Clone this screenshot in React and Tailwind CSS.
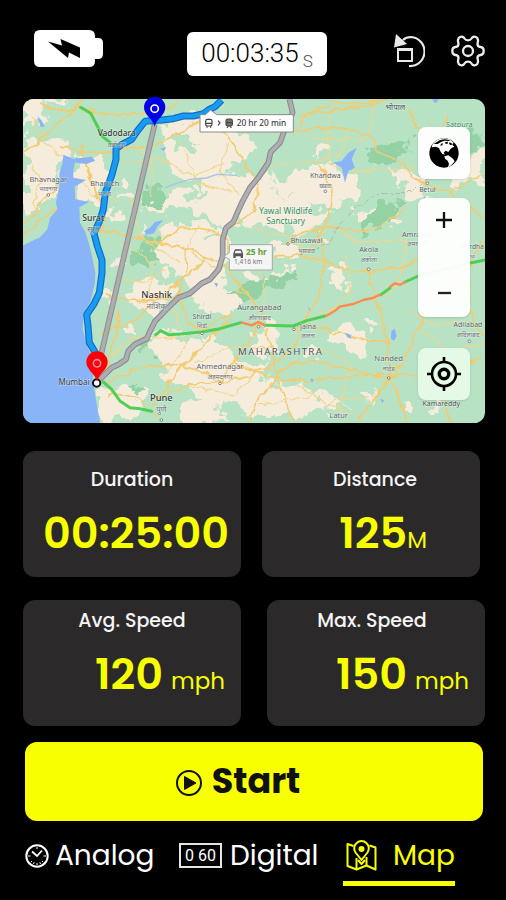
import React from "react";

/* Map drawing: one unit is a third of a CSS pixel at the narrowest layout. */

const creamPatches = [
  "9,110 60,70 130,85 175,30 130,9 9,9",
  "9,130 130,120 150,190 125,210 110,280 60,330 9,400",
  "165,185 215,170 260,210 240,330 190,330 165,285",
  "430,90 530,50 650,110 720,120 680,190 580,250 470,240 430,190",
  "560,235 720,230 770,290 700,360 600,390 520,330",
  "440,290 520,275 560,330 480,350 380,340 360,310",
  "420,400 520,365 610,400 620,500 570,570 470,550 410,480",
  "340,560 440,555 470,600 420,660 350,640 320,600",
  "540,560 600,530 660,600 640,670 560,660 520,610",
  "790,240 900,205 1020,250 1030,300 930,330 820,310 730,260",
  "640,320 760,290 870,320 940,360 850,410 740,390 650,380",
  "400,715 520,705 610,740 700,830 710,910 600,940 460,860 400,770",
  "690,700 760,680 780,760 720,790",
  "640,850 760,860 940,905 990,930 860,955 700,965 620,930",
  "940,700 1000,690 1050,740 1030,780 950,750 910,730",
  "930,510 980,510 975,590 940,570",
  "760,450 840,450 850,490 770,485",
  "1110,210 1190,240 1250,310 1190,310 1130,270",
  "1290,190 1390,170 1390,250 1300,270",
  "240,890 330,860 380,900 350,975 240,975",
  "480,930 560,910 620,975 480,978",
  "640,790 740,800 730,840 660,830",
  "1010,340 1070,330 1060,360 1010,365",
  "1230,930 1260,920 1265,975 1235,975",
];

const creamSpecks = [
  [910, 165, 18], [1110, 380, 18], [1130, 345, 16], [1060, 680, 14], [780, 540, 16],
  [820, 520, 16], [900, 430, 16], [500, 170, 22], [320, 280, 16], [290, 360, 18],
  [270, 600, 18], [330, 700, 14], [1040, 900, 14], [1160, 930, 14], [870, 770, 18],
  [700, 540, 20], [1170, 300, 18], [1080, 200, 12], [300, 500, 14], [370, 420, 12],
];

const forestPatches = [
  "360,300 400,265 440,280 430,320 380,335",
  "340,460 400,430 420,480 380,530 345,500",
  "1010,390 1090,310 1160,320 1120,370 1050,400 1015,415",
  "1290,90 1390,110 1390,170 1310,160",
  "620,590 720,550 830,530 820,560 720,590 660,610",
  "360,740 400,735 400,770 365,775",
  "330,860 355,850 352,900 335,895",
  "1040,180 1130,130 1180,150 1090,210",
];

const greenPatches = [
  "60,30 180,20 340,60 370,120 250,190 160,170 120,110",
  "9,350 60,330 110,335 60,400 9,430",
  "460,120 540,130 530,160 470,165",
  "490,300 560,290 540,310 500,320",
  "470,720 540,715 560,740 480,745",
  "560,420 600,410 590,440",
];

const roads = [
  "M9 170Q80 120 170 30T260 9", "M170 30Q120 60 60 20", "M170 30Q260 70 360 55T470 20",
  "M120 150Q200 180 290 165T400 150Q480 120 560 60", "M9 390Q50 330 85 300T125 260",
  "M9 425Q60 370 110 335", "M180 140Q210 260 240 320T235 420", "M240 400Q330 420 420 440T560 480Q620 500 700 620",
  "M420 440Q480 380 560 400T620 470", "M490 450Q520 520 470 590", "M370 620Q500 560 560 480",
  "M250 590Q330 630 430 610T470 600", "M240 710Q330 690 370 650T430 600", "M245 850Q290 740 300 640",
  "M250 870Q380 790 480 810T600 855", "M430 900Q500 860 600 855T760 800Q860 740 830 690",
  "M400 930Q450 840 580 720T545 700", "M600 855Q680 740 715 690T650 580", "M830 110Q900 85 990 100T1070 170",
  "M1070 170L1130 190L1190 250L1290 295L1390 360", "M830 110Q860 30 940 25T1130 9", "M840 60Q960 40 1080 20",
  "M1170 40Q1180 90 1210 110T1290 60", "M1290 295Q1330 260 1390 240", "M760 480Q850 470 960 510T1200 490",
  "M800 440Q880 380 980 400T1160 330", "M1040 520Q1060 600 1075 640T1105 740L1110 850", "M830 690Q900 640 910 520T870 400",
  "M1110 850Q1160 790 1200 690T1310 560Q1360 480 1390 440", "M1110 850Q1000 820 900 800T760 860Q700 920 690 978",
  "M1110 850Q1060 910 1010 978", "M1110 850Q1150 930 1160 978", "M740 700Q770 850 820 978",
  "M640 790Q750 870 900 850T1200 840", "M1290 978Q1240 880 1390 780", "M560 60Q620 110 690 220T620 400",
  "M900 210Q960 290 920 380T820 480", "M470 590Q500 700 545 700", "M265 900Q340 880 410 960", "M850 680Q1000 730 1105 740",
  "M1350 560Q1330 640 1390 720",
];

const lanes = [
  "M40 60L70 140L130 180", "M300 200L420 190L520 240L620 200", "M330 120L400 210L390 300", "M480 130L530 260L640 290",
  "M620 140L600 230L660 300", "M700 400L800 420L900 500", "M720 500L740 640", "M930 60L920 200L1010 230L1190 210",
  "M990 100L960 180L860 200L750 210", "M1060 20L1040 130L880 130", "M930 380L1010 440L1160 430", "M980 480L990 600L900 660",
  "M1160 430L1140 560L1090 600", "M900 760L990 800L960 940", "M830 870L920 920L1050 900", "M1200 700L1280 760L1390 740",
  "M1160 640L1240 690L1340 680", "M460 640L500 740L440 830", "M520 800L640 750L760 760", "M500 870L640 900L700 840",
  "M300 440L400 500L380 600", "M280 540L360 560L440 520", "M330 300L360 420L480 500", "M540 380L500 460L590 520",
  "M280 780L340 720L470 730", "M720 930L880 900L1000 960", "M180 250L220 300L300 310", "M30 180L60 260L40 340",
];

const lakes = [
  "M940 200L965 195L985 170L1010 155L995 190L1005 215L985 225L975 260L965 215Z",
  "M372 405L390 395L405 378L430 372L412 392L402 412L380 416Z",
  "M52 60L66 75L74 92L62 92Z",
  "M1114 705L1124 698L1130 720L1122 734L1113 728Z",
  "M976 710L992 716L994 728L982 724Z",
  "M862 630L870 640L872 650Z", "M582 560L594 562L590 574Z", "M1235 10L1258 10L1246 22Z",
  "M870 848L882 850L876 860Z", "M420 158L438 154L432 164Z", "M1080 908L1092 912L1088 922Z",
];

const WATER = "#8ab4f8";

const bluePath =
  "M605 12L585 32L565 42L548 54L520 60L490 60L460 68L425 72L375 76L352 105L335 130L305 146L288 158L288 190L276 235L268 258L256 290L250 340L240 372L222 412L232 450L246 492L246 530L238 590L222 624L200 656L204 690L208 740L232 780";

const greyPath =
  "M808 9L818 50L790 112L780 140L752 168L745 200L715 245L690 275L668 315L652 350L640 378L618 396L608 430L608 480L596 520L570 550L545 562L510 592L475 605L440 640L405 676L390 706L380 728L345 745L325 765L318 790L295 806L275 815L240 850";

const towns = [
  { n: "Vadodara", l: "वडोदरा", x: 290, y: 121, s: 25, b: 1 },
  { n: "Bharuch", l: "भरूच", x: 254, y: 271, s: 22 },
  { n: "Bhavnagar", l: "भावनगर", x: 85, y: 257, s: 22 },
  { n: "Surat", l: "सूरत", x: 220, y: 376, s: 26, b: 1 },
  { n: "Nashik", l: "नाशिक", x: 410, y: 605, s: 28, b: 1 },
  { n: "Shirdi", l: "शिर्डी", x: 546, y: 669, s: 21 },
  { n: "Aurangabad", l: "औरंगाबाद", x: 718, y: 641, s: 23 },
  { n: "Jalna", l: "जालना", x: 864, y: 698, s: 21 },
  { n: "Ahmednagar", l: "अहमदनगर", x: 600, y: 820, s: 23 },
  { n: "Pune", l: "पुणे", x: 424, y: 914, s: 28, b: 1 },
  { n: "Nanded", l: "नांदेड", x: 1106, y: 795, s: 23 },
  { n: "Latur", l: "लातूर", x: 956, y: 966, s: 22 },
  { n: "Khandwa", l: "खंडवा", x: 916, y: 247, s: 21 },
  { n: "Bhusawal", l: "भुसावळ", x: 860, y: 442, s: 21 },
  { n: "Akola", l: "अकोला", x: 1046, y: 469, s: 22 },
  { n: "Amravati", l: "अमरावती", x: 1192, y: 422, s: 22 },
  { n: "Betul", l: "बैतूल", x: 1222, y: 288, s: 20 },
  { n: "Wardha", l: "वर्धा", x: 1355, y: 458, s: 20 },
  { n: "Adilabad", l: "आदिलाबाद", x: 1344, y: 694, s: 21 },
];

function Pin({ x, y, color, ring }) {
  return (
    <g transform={`translate(${x} ${y})`}>
      <path d="M0 0C-6 -24 -32 -34 -32 -58A32 32 0 0 1 32 -58C32 -34 6 -24 0 0Z" fill={color} />
      <circle cy="-54" r="11" fill="none" stroke={ring} strokeWidth="5" />
    </g>
  );
}

function RouteMap() {
  return (
    <svg
      viewBox="9 9 1386 972"
      role="img"
      aria-label="Route map from Mumbai to Vadodara"
      className="block h-auto w-full overflow-visible font-['Noto_Sans','Liberation_Sans',sans-serif]"
    >
      <defs>
        <clipPath id="frame">
          <rect x="9" y="9" width="1386" height="972" rx="32" />
        </clipPath>
        <filter id="rough" x="-5%" y="-5%" width="110%" height="110%">
          <feTurbulence type="fractalNoise" baseFrequency="0.022" numOctaves="3" seed="4" />
          <feDisplacementMap in="SourceGraphic" scale="85" xChannelSelector="R" yChannelSelector="G" />
        </filter>
        <filter id="wavy" x="-5%" y="-5%" width="110%" height="110%">
          <feTurbulence type="fractalNoise" baseFrequency="0.03" numOctaves="2" seed="9" />
          <feDisplacementMap in="SourceGraphic" scale="26" xChannelSelector="R" yChannelSelector="G" />
        </filter>
      </defs>

      <g clipPath="url(#frame)">
        <rect x="9" y="9" width="1386" height="972" fill="#b8e2c4" />
        <g filter="url(#rough)">
          {creamPatches.map((p) => (
            <polygon key={p} points={p} fill="#f6ecdc" />
          ))}
          {creamSpecks.map(([x, y, r]) => (
            <ellipse key={`${x}-${y}`} cx={x} cy={y} rx={r * 1.3} ry={r * 0.8} fill="#f6ecdc" />
          ))}
          {greenPatches.map((p) => (
            <polygon key={p} points={p} fill="#b8e2c4" />
          ))}
          {forestPatches.map((p) => (
            <polygon key={p} points={p} fill="#94d2a5" />
          ))}
        </g>
        <g filter="url(#wavy)" fill="none" strokeLinejoin="round">
          {lanes.map((d) => (
            <path key={d} d={d} stroke="#f0d68c" strokeWidth="3.5" />
          ))}
          {roads.map((d) => (
            <path key={d} d={d} stroke="#f2cc72" strokeWidth="5.5" />
          ))}
          <path d="M860 470L930 440L950 400L1000 340L1080 290L1180 290L1230 240" stroke="#9fb3a8" strokeWidth="2.5" strokeDasharray="14 6" />
        </g>
        <g fill={WATER}>
          <path d="M9 981V448L60 424L82 400L90 365L112 340L108 320L118 270L118 230L128 200L130 176L160 188L215 182L226 194L200 204L165 200L160 225L160 245L198 252L164 272L166 310L208 318L178 334L180 380L196 408L206 440L214 470L226 530L225 560L212 615L190 655L188 700L205 760L226 790L218 850L226 900L240 978V981Z" />
          {lakes.map((d) => (
            <path key={d} d={d} />
          ))}
        </g>
        <path d="M435 275L470 262L510 250L560 246L590 235L650 238" fill="none" stroke="#a6c4de" strokeWidth="4" />

        <g fill="none" strokeWidth="9" strokeLinejoin="round" strokeLinecap="round">
          <path stroke="#4fcf57" d="M182 34L212 52L232 90L246 120L285 152M408 716L422 704L445 716L480 714L545 708L600 698L662 680M735 688L820 690L860 674L915 660M1083 596L1110 576M1155 558L1200 538L1355 500L1395 492M250 858L275 880L300 915L330 935L360 938L395 946" />
          <path stroke="#ff8a4c" strokeWidth="7" d="M666 680L695 688L715 678L735 688M918 660L945 644L960 632L1000 624L1030 612L1058 606L1080 596M1110 572L1125 562L1140 566L1155 558" />
        </g>

        <g fill="none" strokeLinejoin="round">
          <path d="M404 85L240 790" stroke="#8d8d8d" strokeWidth="17" />
          <path d="M404 85L240 790" stroke="#adadad" strokeWidth="11" />
          <path d={greyPath} stroke="#86868a" strokeWidth="17" />
          <path d={greyPath} stroke="#aeaeb2" strokeWidth="11" />
          <path d={bluePath} stroke="#1967c8" strokeWidth="21" />
          <path d={bluePath} stroke="#159df2" strokeWidth="14" />
        </g>

        <g textAnchor="middle" fill="#4d5156" stroke="#ffffff" strokeOpacity="0.5" strokeWidth="3" paintOrder="stroke">
          {towns.map((t) => (
            <g key={t.n} fontSize={t.s} fontWeight={t.b ? 500 : 400} fill={t.b ? "#33373b" : "#5c6166"}>
              <text x={t.x} y={t.y}>{t.n}</text>
              <text x={t.x} y={t.y + t.s + 7} fontSize={t.s - 4} fontWeight="400" fill="#6b7075">{t.l}</text>
            </g>
          ))}
          <text x="162" y="868" fontSize="24" fill="#33373b">Mumbai</text>
          <text x="782" y="777" fontSize="29" letterSpacing="4">MAHARASHTRA</text>
          <text x="1126" y="42" fontSize="24">भोपाल</text>
          <text x="1318" y="94" fontSize="22" fill="#3f8f63">Satpura</text>
          <text x="1264" y="930" fontSize="21">Kamareddy</text>
          <g fill="#2f8f63" fontSize="25">
            <text x="797" y="354">Yawal Wildlife</text>
            <text x="797" y="383">Sanctuary</text>
          </g>
        </g>
        <g fill="#ffffff" stroke="#6b6f73" strokeWidth="2.5">
          {[[85, 297], [916, 286], [546, 712], [716, 692], [822, 700], [600, 862], [1106, 846], [1046, 520], [424, 972], [1222, 262], [1348, 736], [804, 444]].map(([x, y]) => (
            <circle key={`${x}-${y}`} cx={x} cy={y} r="4" />
          ))}
        </g>

        <path d="M540 56H556L572 42L590 56H820V108H540Z" fill="#ffffff" stroke="#8a8a8a" strokeWidth="3" />
        <g fill="none" stroke="#444444" strokeWidth="3.5">
          <rect x="557" y="70" width="19" height="20" rx="5" />
          <path d="M557 82H576M561 95V90M572 95V90M594 74L600 81L594 88" />
          <rect x="618" y="69" width="19" height="21" rx="5" fill="#777777" />
          <path d="M618 80H637M621 96L625 90M634 96L630 90" />
        </g>
        <text x="650" y="89" fontSize="25" fontWeight="500" fill="#3c3c3c">20 hr 20 min</text>

        <path d="M628 446H757V522H628V490L612 481L628 470Z" fill="#f4f5f5" stroke="#aaaaaa" strokeWidth="3" />
        <path d="M640 486V472L645 460H664L669 472V486H662V481H647V486ZM647 464L644 472H665L662 464Z" fill="#555555" />
        <text x="678" y="477" fontSize="25" fontWeight="700" fill="#5da331">25 hr</text>
        <text x="642" y="504" fontSize="20" fill="#777777">1,416 km</text>

        <circle cx="230" cy="861" r="11" fill="#ffffff" stroke="#111111" strokeWidth="6" />
      </g>
      <Pin x={404} y={92} color="#0303e6" ring="#ffffff" />
      <Pin x={231} y={856} color="#fb0007" ring="#e58c96" />
    </svg>
  );
}

function GlobeIcon() {
  return (
    <svg viewBox="0 0 90 90" className="size-[30px]" aria-hidden="true">
      <circle cx="45" cy="45" r="44" fill="#000" />
      <path
        fill="#fbfdfb"
        d="M10 20Q22 2 44 1L62 4L74 14L70 20L76 26L68 30L64 34L58 42L50 38L44 44L48 50L40 48L34 40L30 30L20 26L8 28ZM46 55L58 52L72 62L77 70Q68 84 56 89L60 78L56 68L48 62Z"
      />
      <path fill="#000" d="M14 18L32 7L46 4L62 6L61 9L46 8L36 12L26 18ZM48 12L57 11L56 17L50 18ZM62 13L71 18L66 22L60 18ZM36 17L42 16L40 22L34 23Z" />
    </svg>
  );
}

function LocateIcon() {
  return (
    <svg viewBox="0 0 34 34" className="size-[34px]" fill="none" stroke="#000" strokeWidth="2.6" aria-hidden="true">
      <circle cx="17" cy="17" r="12" />
      <circle cx="17" cy="17" r="4.7" strokeWidth="3.4" />
      <path d="M17 0V6M17 28V34M0 17H6M28 17H34" />
    </svg>
  );
}

function BatteryIcon() {
  return (
    <svg viewBox="0 0 69 37" className="h-[37px] w-[69px]" role="img" aria-label="Battery charging">
      <path d="M6 0H55Q61 0 61 6V8H64Q69 8 69 13V24Q69 29 64 29H61V31Q61 37 55 37H6Q0 37 0 31V6Q0 0 6 0Z" fill="#fff" />
      <path d="M14 11.5L28 15.5L26.5 9L46 17.5V28L35 22.5L34 28Z" fill="#000" />
    </svg>
  );
}

function ResetIcon() {
  return (
    <svg viewBox="0 0 32 34" className="h-[34px] w-8" fill="none" stroke="#e9e9e9" aria-hidden="true">
      <path d="M10 6Q13 3 18 3A14.5 14.5 0 0 1 16 32" strokeWidth="2.2" />
      <path d="M3 0L14 10L1 13.5Z" fill="#e9e9e9" stroke="none" />
      <rect x="5" y="15.5" width="14" height="11.5" strokeWidth="2" />
      <path d="M4 15.5H20" strokeWidth="3" />
    </svg>
  );
}

function GearIcon() {
  return (
    <svg viewBox="0 0 34 32" className="h-8 w-[34px]" fill="none" stroke="#ededed" strokeWidth="2.3" strokeLinejoin="round" aria-hidden="true">
      <circle cx="17" cy="16" r="5" />
      <path d="M13.500 3.500C12.500 1.500 9.800 .8 7.800 3C5.800 5.500 7.500 7.500 7.500 9C7.500 11 6.500 11.800 4.500 12C.2 12.500 .2 19.500 4.500 20C6.500 20.200 7.500 21 7.500 23C7.500 24.500 5.800 26.500 7.800 29C9.800 31.200 12.500 30.500 13.500 28.500C15 26 19 26 20.500 28.500C21.500 30.500 24.200 31.200 26.200 29C28.200 26.500 26.500 24.500 26.500 23C26.500 21 27.500 20.200 29.500 20C33.800 19.500 33.800 12.500 29.500 12C27.500 11.800 26.500 11 26.500 9C26.500 7.500 28.200 5.500 26.200 3C24.200 .8 21.500 1.500 20.500 3.500C19 6 15 6 13.500 3.500Z" />
    </svg>
  );
}

function ClockIcon() {
  return (
    <svg viewBox="0 0 24 24" className="size-6" fill="none" stroke="#fff" aria-hidden="true">
      <circle cx="12" cy="12" r="10.700" strokeWidth="2" />
      <path d="M7 7.500L12 12L17 6.500" strokeWidth="1.800" />
      <path d="M12 3V5M12 19V21M3 12H5.500M18.500 12H21M5.800 18.200L7 17M18.200 18.200L17 17M8.500 20L9.200 18.200M15.500 20L14.800 18.200" strokeWidth="1" />
    </svg>
  );
}

function MapIcon() {
  return (
    <svg viewBox="0 0 31 31" className="size-[31px]" fill="none" stroke="#f7ff00" strokeWidth="2" strokeLinejoin="round" aria-hidden="true">
      <path d="M7.500 6L1.500 4V26L10.500 29.500L20.500 25.500L29.500 29.500V7.500L23.500 5.500" />
      <path d="M10.500 18V29M20.500 17V25.500" />
      <path d="M15.500 20L9.500 12.500A7.300 7.300 0 1 1 21.500 12.500Z" />
      <path d="M12 20L15.500 24L19 20" />
      <circle cx="15.500" cy="9" r="2" fill="#f7ff00" />
    </svg>
  );
}

function StatCard({ label, value, unit, labelClass, valueClass, unitClass, cardClass }) {
  return (
    <article className={`h-[126px] rounded-xl bg-[#2b292a] ${cardClass}`}>
      <h2 className={`text-center text-[19px] font-medium leading-7 text-neutral-100 ${labelClass}`}>{label}</h2>
      <p className={`mt-[9px] flex items-baseline justify-end leading-[60px] text-[#f7ff00] ${valueClass}`}>
        <span className="text-[43px] font-semibold">{value}</span>
        {unit && <span className={unitClass}>{unit}</span>}
      </p>
    </article>
  );
}

const mapButton = "flex items-center justify-center rounded-lg shadow";
const tab = "flex h-[50px] items-center border-b-[5px] pb-1.5 text-[28px] leading-9";

export default function App() {
  return (
    <div className="min-h-screen bg-black pb-[14px] pl-[23px] pr-[21px] pt-[30px] font-['Poppins','Inter','Liberation_Sans',sans-serif] text-white">
      <header className="flex items-start justify-between pl-[11px]">
        <BatteryIcon />
        <output
          aria-label="Elapsed time"
          className="ml-[18px] mt-0.5 flex h-11 w-[140px] items-start justify-center gap-1 rounded-md bg-white font-['Roboto',sans-serif] text-black"
        >
          <span className="text-[26px] font-light leading-[42px]">00:03:35</span>
          <span className="text-[17px] font-light leading-[58px] text-neutral-600">S</span>
        </output>
        <div className="mt-1 flex items-center gap-[26px]">
          <button type="button" aria-label="Reset">
            <ResetIcon />
          </button>
          <button type="button" aria-label="Settings">
            <GearIcon />
          </button>
        </div>
      </header>

      <section className="relative mt-[23px]">
        <RouteMap />
        <div className="absolute right-[15px] top-7 flex w-[52px] flex-col">
          <button type="button" aria-label="Map type" className={`${mapButton} h-[52px] bg-white/95`}>
            <GlobeIcon />
          </button>
          <div className="mt-[19px] flex h-[119px] flex-col rounded-lg bg-white/95 shadow">
            <button type="button" aria-label="Zoom in" className="flex h-11 items-center justify-center">
              <svg viewBox="0 0 16 16" className="size-4" stroke="#111" strokeWidth="2.300" aria-hidden="true">
                <path d="M8 0V16M0 8H16" />
              </svg>
            </button>
            <button type="button" aria-label="Zoom out" className="mt-auto flex h-12 items-center justify-center">
              <svg viewBox="0 0 16 16" className="size-4" stroke="#222" strokeWidth="2.300" aria-hidden="true">
                <path d="M2 8H15" />
              </svg>
            </button>
          </div>
          <button type="button" aria-label="My location" className={`${mapButton} mt-[31px] h-[52px] bg-[#e6fbe8]/95`}>
            <LocateIcon />
          </button>
        </div>
      </section>

      <section className="mt-7 flex flex-col gap-[23px]">
        <div className="grid grid-cols-2 gap-[21px] pr-[5px]">
          <StatCard label="Duration" value="00:25:00" cardClass="pt-[15px]" valueClass="pr-3" labelClass="" />
          <StatCard
            label="Distance"
            value="125"
            unit="M"
            cardClass="pt-[15px]"
            labelClass="pl-2"
            valueClass="pr-[53px]"
            unitClass="text-[23px]"
          />
        </div>
        <div className="grid grid-cols-2 gap-[26px]">
          <StatCard
            label="Avg. Speed"
            value="120"
            unit="mph"
            cardClass="pt-[7px]"
            labelClass=""
            valueClass="gap-2 pr-4"
            unitClass="text-[23px]"
          />
          <StatCard
            label="Max. Speed"
            value="150"
            unit="mph"
            cardClass="pt-[7px]"
            labelClass="pr-2"
            valueClass="gap-2 pr-4"
            unitClass="text-[23px]"
          />
        </div>
      </section>

      <div className="mt-4 px-0.5">
        <button
          type="button"
          className="flex h-[79px] w-full items-center justify-center gap-2.5 rounded-xl bg-[#f7ff00] pr-8 text-[35px] font-bold text-[#111]"
        >
          <svg viewBox="0 0 26 26" className="mt-0.5 size-[26px]" aria-hidden="true">
            <circle cx="13" cy="13" r="12" fill="none" stroke="#111" strokeWidth="2" />
            <path d="M8.500 6.500L20 13L8.500 19.500Z" fill="#111" stroke="#111" strokeLinejoin="round" />
          </svg>
          Start
        </button>
      </div>

      <nav className="mt-[15px] flex justify-between pl-0.5 pr-[30px]">
        <button type="button" className={`${tab} gap-1.5 border-transparent`}>
          <ClockIcon />
          Analog
        </button>
        <button type="button" className={`${tab} gap-2 border-transparent`}>
          <span
            aria-hidden="true"
            className="flex h-[25px] w-[43px] items-center justify-center border-2 border-neutral-200 font-['Roboto',sans-serif] text-[16px]"
          >
            0 60
          </span>
          Digital
        </button>
        <button type="button" aria-current="page" className={`${tab} gap-4 border-[#f7ff00] pl-[3px] text-[#f7ff00]`}>
          <MapIcon />
          Map
        </button>
      </nav>
    </div>
  );
}
